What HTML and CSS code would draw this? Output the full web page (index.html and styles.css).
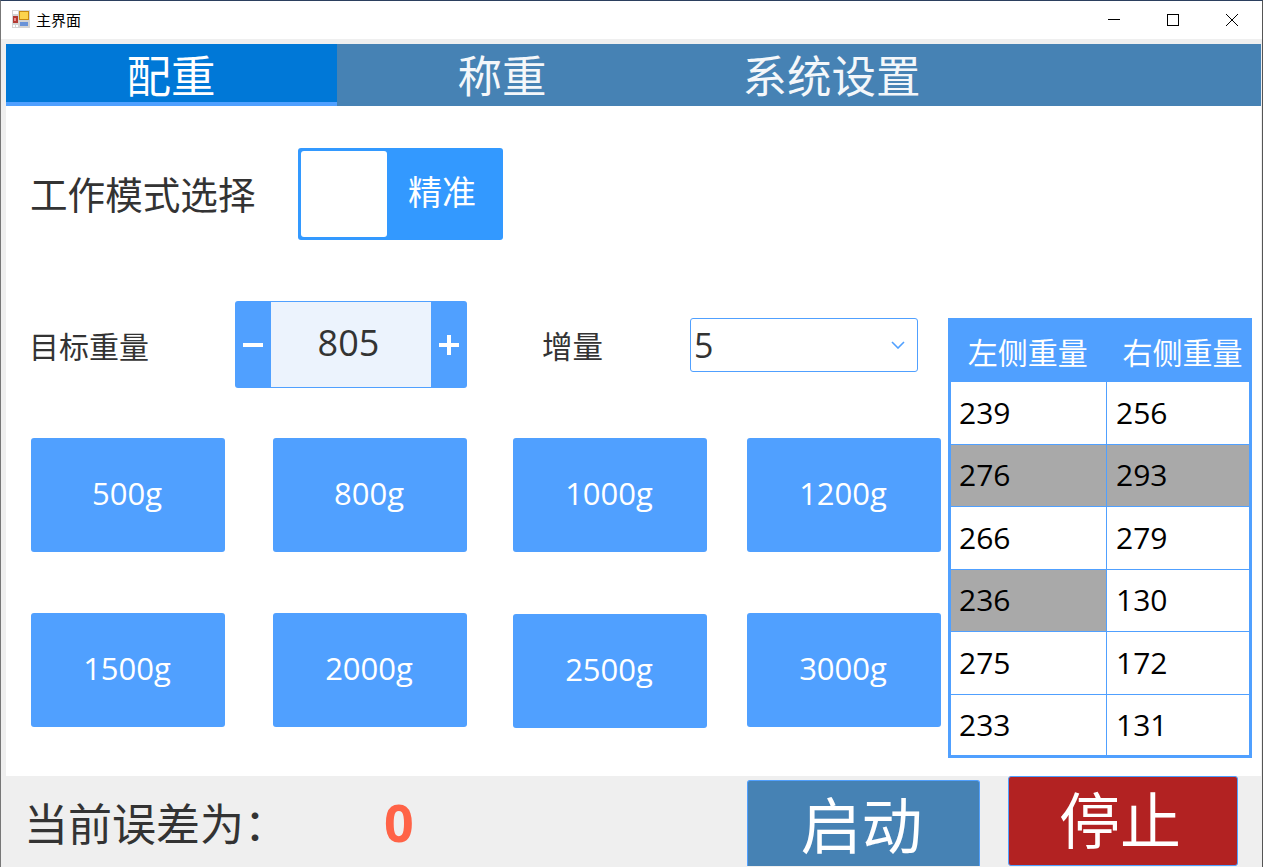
FILE: index.html
```html
<!DOCTYPE html>
<html lang="zh-CN">
<head>
    <meta charset="UTF-8">
    <title>主界面</title>
    <link rel="stylesheet" href="styles.css">
</head>
<body>
<div class="window">
    <!-- title bar -->
    <header class="titlebar">
        <svg class="appIcon" width="18" height="18" viewBox="0 0 18 18">
            <rect x="0" y="0" width="18" height="18" fill="#d4d4d4"/>
            <rect x="1" y="1" width="5" height="3" fill="#fff"/>
            <rect x="7" y="1" width="10" height="9" fill="#c98a10"/>
            <rect x="8" y="2" width="8" height="7" fill="#fcd34d"/>
            <rect x="1" y="6" width="5" height="7" fill="#b23a32"/>
            <rect x="2" y="8" width="2" height="3" fill="#e88"/>
            <rect x="8" y="12" width="8" height="4" fill="#6a93d8"/>
            <rect x="1" y="15" width="2" height="2" fill="#fff"/>
            <rect x="4" y="15" width="2" height="2" fill="#fff"/>
        </svg>
        <span class="titleText">主界面</span>
        <div class="winButtons">
            <svg width="12" height="12" viewBox="0 0 12 12"><path d="M0 5.5H12" stroke="#000" fill="none"/></svg>
            <svg width="12" height="12" viewBox="0 0 12 12"><rect x="0.5" y="0.5" width="11" height="11" stroke="#000" fill="none"/></svg>
            <svg width="12" height="12" viewBox="0 0 12 12"><path d="M0 0L12 12M12 0L0 12" stroke="#000" fill="none"/></svg>
        </div>
    </header>

    <!-- tabs -->
    <nav class="tabs">
        <div class="tab active">配重</div>
        <div class="tab">称重</div>
        <div class="tab wide">系统设置</div>
    </nav>

    <!-- main panel -->
    <main class="panel">
        <div class="leftColumn">
            <div class="modeRow">
                <span class="modeLabel">工作模式选择</span>
                <div class="switch">
                    <div class="switchKnob"></div>
                    <span class="switchText">精准</span>
                </div>
            </div>

            <div class="targetRow">
                <span class="fieldLabel targetLabel">目标重量</span>
                <div class="stepper">
                    <div class="stepBtn">
                        <svg width="20" height="20" viewBox="0 0 20 20"><path d="M0 10H20" stroke="#fff" stroke-width="4"/></svg>
                    </div>
                    <div class="stepValue">805</div>
                    <div class="stepBtn">
                        <svg width="20" height="20" viewBox="0 0 20 20"><path d="M0 10H20M10 0V20" stroke="#fff" stroke-width="4"/></svg>
                    </div>
                </div>
                <span class="fieldLabel stepLabel">增量</span>
                <div class="combo">
                    <span>5</span>
                    <svg width="14" height="8" viewBox="0 0 14 8"><path d="M1 1L7 7L13 1" stroke="#50a0ff" stroke-width="1.6" fill="none"/></svg>
                </div>
            </div>

            <div class="presets">
                <button class="preset">500g</button>
                <button class="preset">800g</button>
                <button class="preset">1000g</button>
                <button class="preset">1200g</button>
                <button class="preset">1500g</button>
                <button class="preset">2000g</button>
                <button class="preset lower">2500g</button>
                <button class="preset">3000g</button>
            </div>
        </div>

        <table class="weights">
            <thead>
                <tr><th class="leftHead">左侧重量</th><th class="rightHead">右侧重量</th></tr>
            </thead>
            <tbody>
                <tr><td>239</td><td>256</td></tr>
                <tr><td class="grey">276</td><td class="grey">293</td></tr>
                <tr><td>266</td><td>279</td></tr>
                <tr><td class="grey">236</td><td>130</td></tr>
                <tr><td>275</td><td>172</td></tr>
                <tr><td>233</td><td>131</td></tr>
            </tbody>
        </table>
    </main>

    <!-- bottom bar -->
    <footer class="footer">
        <span class="errorLabel">当前误差为：</span>
        <span class="errorValue">0</span>
        <button class="bigBtn start">启动</button>
        <button class="bigBtn stop">停止</button>
    </footer>
</div>
</body>
</html>
```

FILE: styles.css
```css
/* Overall page styling */
* {
    box-sizing: border-box;
}

html, body {
    margin: 0;
    padding: 0;
    height: 100%;
    overflow: hidden;
}

body {
    font-family: "Open Sans", "Noto Sans CJK SC", sans-serif;
    color: #333;
}

button {
    font-family: inherit;
    margin: 0;
    padding: 0;
    cursor: pointer;
}

.window {
    width: 1263px;
    height: 867px;
    background: #efefef;
    border-top: 1px solid #2b3f5e;
    border-left: 1px solid #777;
    border-right: 1px solid #555;
    overflow: hidden;
}

/* Title bar */
.titlebar {
    height: 38px;
    background: #fff;
    display: flex;
    align-items: center;
    padding-left: 11px;
}

.appIcon {
    margin-right: 6px;
    margin-bottom: 2px;
}

.titleText {
    font-size: 15px;
    color: #000;
    padding-bottom: 2px;
    font-family: "Noto Sans CJK SC", sans-serif;
}

.winButtons {
    margin-left: auto;
    display: flex;
    gap: 47px;
    padding-right: 24px;
}

/* Tabs */
.tabs {
    margin: 5px 0 0 5px;
    width: 1255px;
    height: 62px;
    background: #4682b4;
    display: flex;
}

.tab {
    width: 331px;
    height: 62px;
    color: #f4f7fa;
    font-size: 44.5px;
    line-height: 60px;
    text-align: center;
    padding-right: 1px;
    font-family: "Noto Sans CJK SC", sans-serif;
}

.tab.wide {
    padding-right: 4px;
}

.tab.active {
    background: #0078d7;
    color: #fff;
    border-bottom: 4px solid #50a0ff;
}

/* Main panel */
.panel {
    margin-left: 5px;
    width: 1255px;
    height: 670px;
    background: #fff;
    display: flex;
    padding-left: 25px;
}

.leftColumn {
    width: 917px;
}

.modeRow {
    display: flex;
    align-items: center;
    margin-top: 42px;
    height: 92px;
}

.modeLabel {
    font-size: 37.6px;
    width: 268px;
    margin-left: -1px;
    padding-bottom: 4px;
    font-family: "Noto Sans CJK SC", sans-serif;
}

.switch {
    width: 205px;
    height: 92px;
    background: #3399ff;
    border-radius: 3px;
    padding: 3px;
    display: flex;
    align-items: center;
}

.switchKnob {
    width: 86px;
    height: 86px;
    background: #fff;
    border-radius: 3px;
}

.switchText {
    flex: 1;
    text-align: center;
    color: #fff;
    font-size: 34px;
    padding-bottom: 7px;
    padding-right: 3px;
    font-family: "Noto Sans CJK SC", sans-serif;
}

/* Target weight row */
.targetRow {
    display: flex;
    align-items: center;
    margin-top: 61px;
    height: 87px;
}

.fieldLabel {
    font-size: 30.5px;
    font-family: "Noto Sans CJK SC", sans-serif;
}

.targetLabel {
    font-size: 30px;
    width: 206px;
    margin-left: -2px;
}

.stepLabel {
    width: 148px;
    margin-left: 75px;
}

.stepper {
    width: 232px;
    height: 87px;
    background: #50a0ff;
    border-radius: 3px;
    display: flex;
    padding: 1px 0;
}

.stepBtn {
    width: 36px;
    display: flex;
    align-items: center;
    justify-content: center;
}

.stepValue {
    flex: 1;
    background: #ecf3fd;
    font-size: 36px;
    line-height: 81px;
    padding-right: 5px;
    text-align: center;
}

.combo {
    width: 228px;
    height: 54px;
    border: 1px solid #50a0ff;
    border-radius: 3px;
    display: flex;
    align-items: center;
    justify-content: space-between;
    padding: 0 12px 0 3px;
    font-size: 34px;
}

/* Preset buttons */
.presets {
    display: grid;
    grid-template-columns: 242px 240px 234px 194px;
    grid-template-rows: 114px 114px;
    row-gap: 61px;
    margin-top: 50px;
}

.preset {
    width: 194px;
    height: 114px;
    background: #50a0ff;
    color: #fff;
    border: none;
    border-radius: 3px;
    font-size: 31px;
    padding: 0 2px 4px 0;
}

.preset.lower {
    margin-top: 1px;
}

/* Weights table */
.weights {
    width: 304px;
    height: 440px;
    margin-top: 212px;
    border-collapse: collapse;
    table-layout: fixed;
    border: 3px solid #50a0ff;
    font-family: "Open Sans", sans-serif;
}

.weights th {
    height: 62px;
    background: #50a0ff;
    color: #fff;
    font-size: 30px;
    font-weight: normal;
    font-family: "Noto Sans CJK SC", sans-serif;
    padding: 0;
    white-space: nowrap;
}

.weights .leftHead {
    width: 157px;
    padding-right: 2px;
}

.weights .rightHead {
    text-align: left;
    padding-left: 16px;
}

.weights td {
    border: 1px solid #50a0ff;
    color: #000;
    font-size: 30px;
    padding: 0 0 1px 8px;
    height: 62.5px;
}

.weights td + td {
    padding-left: 9px;
}

.weights td.grey {
    background: #a9a9a9;
}

/* Bottom bar */
.footer {
    height: 91px;
    display: flex;
    padding-left: 23px;
}

.errorLabel {
    font-size: 44px;
    width: 360px;
    line-height: 92px;
    white-space: nowrap;
    font-family: "Noto Sans CJK SC", sans-serif;
}

.errorValue {
    font-size: 52px;
    font-weight: bold;
    color: #ff6347;
    line-height: 92px;
    width: 363px;
}

.bigBtn {
    height: 90px;
    border: 1px solid #50a0ff;
    border-radius: 3px;
    color: #fff;
    font-size: 61px;
    line-height: 72px;
    padding: 0 4px 6px 0;
    font-family: "Noto Sans CJK SC", sans-serif;
}

.start {
    width: 233px;
    height: 86px;
    background: #4682b4;
    margin-top: 4px;
    border-bottom: none;
    border-radius: 3px 3px 0 0;
    padding-bottom: 2px;
}

.stop {
    width: 230px;
    background: #b22222;
    margin-left: 28px;
    padding-right: 6px;
}
```
